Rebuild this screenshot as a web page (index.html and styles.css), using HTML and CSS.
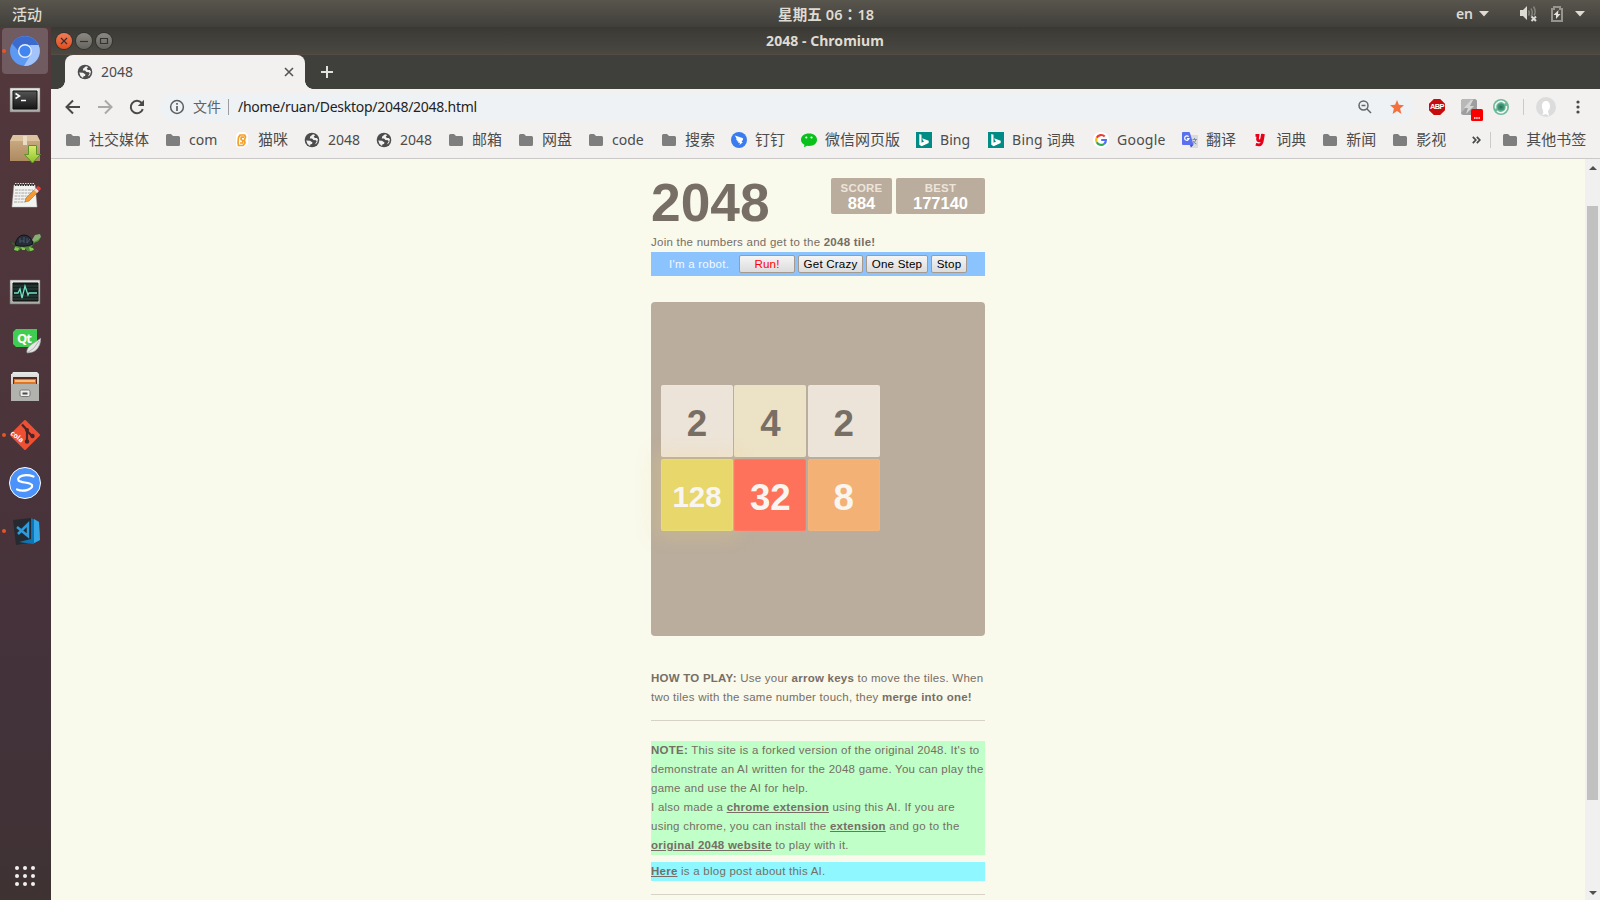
FILE: index.html
```html
<!DOCTYPE html>
<html lang="zh-CN">
<head>
<meta charset="utf-8">
<title>2048</title>
<link rel="stylesheet" href="styles.css">
</head>
<body>
<svg class="defs" aria-hidden="true">
  <defs>
    <linearGradient id="steel" x1="0" y1="0" x2="0" y2="1"><stop offset="0" stop-color="#e8e8e6"/><stop offset="1" stop-color="#a9a9a6"/></linearGradient>
    <linearGradient id="box" x1="0" y1="0" x2="0" y2="1"><stop offset="0" stop-color="#cfb189"/><stop offset="1" stop-color="#ae8a60"/></linearGradient>
    <linearGradient id="arrow" x1="0" y1="0" x2="0" y2="1"><stop offset="0" stop-color="#dbec6e"/><stop offset="1" stop-color="#8cc22a"/></linearGradient>
    <linearGradient id="screen" x1="0" y1="0" x2="0" y2="1"><stop offset="0" stop-color="#555"/><stop offset="1" stop-color="#161616"/></linearGradient>
  </defs>
  <symbol id="folder" viewBox="0 0 16 16"><path fill="#7e7e7e" d="M1 3.500Q1 2 2.500 2H6l2 2h5.500Q15 4 15 5.500v7Q15 14 13.500 14h-11Q1 14 1 12.500z"/></symbol>
  <symbol id="globe" viewBox="0 0 16 16"><circle cx="8" cy="8" r="7.300" fill="#4c4c4c"/><path fill="#f2f1f0" d="M2.200 8.500 6 8.700 8.500 10.500 8 12 6.500 12.200 6 14 3.500 12zM9 2.300 6.200 4.500 5.800 6.500 8 6.400 9.500 8 12 8.200 12.700 9.500 10.800 12.600 13 11 14 7.500 12.800 6 11 6.100 9.700 4.800 11.200 3z"/></symbol>
  <symbol id="bing" viewBox="0 0 16 16"><path fill="#008c84" d="M0 0h16v16H0z"/><path fill="#fff" d="M3.300 2 5.500 2.800V10.800L8.300 9.300 7 8.600 6.100 6.300 12.700 8.700V11L5.600 14.300 3.300 12.700z"/></symbol>
</svg>

<header class="topbar">
  <span class="activities">活动</span>
  <span class="clock" lang="zh-TW">星期五 06：18</span>
  <div class="status">
    <span>en</span>
    <svg class="caret" viewBox="0 0 10 6"><path d="M0 0h10L5 5.500z"/></svg>
    <svg class="volume" width="17" height="17" viewBox="0 0 17 17"><path fill="#dcdad5" d="M0 5h3l4-4v14l-4-4H0z"/><path fill="none" stroke="#85837c" stroke-width="1.500" d="M8.500 5.500q1.500 2.500 0 5M11 3.500q2.500 4.500 0 8M13.500 1.500q3 5 .5 9"/><path stroke="#dcdad5" stroke-width="2" d="m11.500 11.500 4.500 4.500m0-4.500-4.500 4.500"/></svg>
    <svg class="battery" width="12" height="16" viewBox="0 0 12 16"><path fill="none" stroke="#96948d" stroke-width="2" d="M1 3h2V1h6v2h2v12H1z"/><path fill="#e2e0dc" d="M7.500 4 2.500 9H5v4l4.500-5H7z"/></svg>
    <svg class="caret" viewBox="0 0 10 6"><path d="M0 0h10L5 5.500z"/></svg>
  </div>
</header>

<div class="desktop">
  <nav class="dock">
    <div class="app current running"><svg viewBox="0 0 32 32"><circle cx="16" cy="16" r="15" fill="#5d98f2"/><path fill="#3c6bd0" d="M3 8.500A15 15 0 0 1 29.500 10H16a6.500 6.500 0 0 0-6.500 6z"/><path fill="#a3c4fa" d="M29.500 10A15 15 0 0 1 15 31l7-12q2-5-1-9z"/><circle cx="16" cy="16" r="7" fill="#e9f1fd"/><circle cx="16" cy="16" r="5.600" fill="#4385f0"/></svg></div>
    <div class="app"><svg viewBox="0 -1 32 32"><path fill="url(#steel)" stroke="#777" stroke-width=".5" d="M1 4h30v24H1z"/><path fill="url(#screen)" stroke="#111" d="M4 7h24v18H4z"/><path fill="none" stroke="#fff" stroke-width="1.500" d="m6.500 9.500 4 2.500-4 2.500M12 16.500h5"/></svg></div>
    <div class="app"><svg viewBox="0 0 32 32"><path fill="url(#box)" d="M1 10 4 4h24l3 6v20H1z"/><path fill="#dcc29d" d="M4 4h24l3 6H1z"/><path fill="#eadbc4" d="M14 5h4v9h-4z"/><path fill="url(#arrow)" stroke="#5c922a" d="M19.500 14.500h8v9h4L23.500 32l-8-8.500h4z"/></svg></div>
    <div class="app"><svg viewBox="0 0 32 32"><path fill="#f3f3f1" stroke="#bbb" stroke-width=".5" d="M5 6h21l2 22H3z"/><path stroke="#333" stroke-width="3" stroke-dasharray="1.500 1" d="M6 5.500h20"/><path stroke="#ddd" stroke-dasharray="1.500 1" d="M6 4.500h20"/><path stroke="#a4a4a4" stroke-dasharray="3 .7 2 .7" d="M6 11h18M6 14h16M5.500 17h14M5.500 20h12M5 23h11"/><path fill="#f49a32" stroke="#9a5d1e" stroke-width=".5" d="m17 19 9-9 3 3-9 9-4 1z"/><path fill="#ddd" d="m25 11 2-2 3 3-2 2z"/><path fill="#e53b35" d="m27 9 2-2q3 1 3 3l-2 2z"/></svg></div>
    <div class="app"><svg viewBox="0 0 32 32"><path fill="#55803f" stroke="#29452a" stroke-width=".7" d="M1 15q3 0 6 3l13 1q4-2 5-6 0-4 3-4l3-1q1 3 0 5-2 3-5 3l-4 5 2 3-5 1-3-3H12l-2 2-5-1 1-4z"/><path fill="#262c38" stroke="#11141a" d="M6 18Q8 8 15 8q7 0 9 9-9 4-18 1z"/><path stroke="#536078" fill="none" stroke-width=".8" d="M11 11v5m0-2h4m0-4v6m3-5v5l3-4"/><path fill="#84c84d" d="m6 20 4 1-1 3-4-1zm6 0 4 1v2h-3zm8 0 4 1 1 2-4 1z"/><path fill="#86ad73" d="m23 13 3-5 5-1 1 3-3 3-4 2z"/></svg></div>
    <div class="app"><svg viewBox="0 -1 32 32"><path fill="url(#steel)" stroke="#70706d" stroke-width=".6" d="M1 4h30v24H1z"/><path fill="#14231f" stroke="#111" d="M4 7h25v18H4z"/><path stroke="#30453f" d="M4 10h25M4 13h25M4 20h25M4 23h25"/><path fill="none" stroke="#72e0c3" stroke-width="1.300" d="M5 17h4l2-4 2 9 3-12 3 9 1-2h8"/></svg></div>
    <div class="app"><svg viewBox="0 0 32 32"><path fill="#41cd52" d="M7 6h21v18H7L4 21V9z"/><text x="8" y="20" class="qt">Qt</text><path fill="#e7e8e6" stroke="#8c918d" stroke-width=".6" d="M32 15Q31 30 18 30q-1-5 5-9 5-3 9-6z"/><path stroke="#9b9f9c" stroke-width=".7" d="M18 30q7-3 12-12" fill="none"/></svg></div>
    <div class="app"><svg viewBox="0 0 32 32"><path fill="url(#steel)" d="M3 3 4 1h24l2 2v27H2V3z"/><path fill="#5a2a18" d="M4 6h24v8H4z"/><path fill="#e07528" d="M5 8h22v6H5z"/><path stroke="#ffd7a0" stroke-width="1.500" d="M6 10h20"/><path fill="#b1b1ae" d="M2 13h28v16q0 1-1 1H3q-1 0-1-1z"/><rect x="11" y="19" width="10" height="6.500" rx="1.500" fill="#eee" stroke="#777"/><path stroke="#4a4a4a" stroke-width="2" d="M13.500 22.500h5"/></svg></div>
    <div class="app running"><svg viewBox="0 0 32 32"><path fill="#ef5033" stroke="#ef5033" stroke-width="2" stroke-linejoin="round" d="M16 2 30 16 16 30 2 16z"/><path fill="none" stroke="#43272a" stroke-width="2.200" d="M13 5.500 18 11v12m0-11 5 5"/><circle cx="18" cy="11" r="2" fill="#43272a"/><circle cx="18" cy="22.500" r="2.200" fill="#43272a"/><circle cx="23.500" cy="17" r="2.200" fill="#43272a"/><text x="1" y="17" transform="rotate(38 4 16)" class="cola">cola</text></svg></div>
    <div class="app"><svg viewBox="0 0 32 32"><circle cx="16" cy="16" r="15.500" fill="#4b92fa" stroke="#fff" /><path fill="none" stroke="#fff" stroke-width="2.200" stroke-linecap="round" d="M24.500 9.500C15 6 7.500 10 9.500 13.500c2 2.500 12 1.500 13.500 4.500 1.500 4-8 7.500-15 4.500"/></svg></div>
    <div class="app running"><svg viewBox="0 0 32 32"><path fill="#252a30" d="M4 5 22 3 25 27 7 30z"/><path fill="#0d75b5" d="m22 3 8 4 1 18-7 4-14-2 12-3z"/><path fill="#35a7e6" d="m25 4 5 3 1 18-6 3z"/><path fill="none" stroke="#2f9bda" stroke-width="2.500" d="m8 12 11 9V9L9 19"/></svg></div>
    <svg class="launcher" viewBox="0 0 20 20"><g fill="#f2f1f0"><circle cx="2" cy="2" r="2"/><circle cx="10" cy="2" r="2"/><circle cx="18" cy="2" r="2"/><circle cx="2" cy="10" r="2"/><circle cx="10" cy="10" r="2"/><circle cx="18" cy="10" r="2"/><circle cx="2" cy="18" r="2"/><circle cx="10" cy="18" r="2"/><circle cx="18" cy="18" r="2"/></g></svg>
  </nav>

  <section class="window">
    <div class="titlebar">
      <div class="controls">
        <i class="ctl close"><svg viewBox="0 0 16 16"><path d="m5 5 6 6m0-6-6 6"/></svg></i>
        <i class="ctl"><svg viewBox="0 0 16 16"><path d="M4 8.500h8"/></svg></i>
        <i class="ctl"><svg viewBox="0 0 16 16"><path d="M4.500 5.500h7v5h-7z"/></svg></i>
      </div>
      <span class="wintitle">2048 - Chromium</span>
    </div>
    <div class="tabstrip">
      <div class="tab">
        <svg width="16" height="16"><use href="#globe"/></svg>
        <span>2048</span>
        <svg class="x" width="10" height="10" viewBox="0 0 10 10"><path d="m1 1 8 8m0-8-8 8"/></svg>
      </div>
      <svg class="plus" width="12" height="12" viewBox="0 0 12 12"><path d="M6 0v12M0 6h12"/></svg>
    </div>
    <div class="toolbar">
      <svg width="16" height="16" viewBox="0 0 16 16"><path class="nav" d="M15 8H2m6-6.500L1.500 8 8 14.500"/></svg>
      <svg width="16" height="16" viewBox="0 0 16 16"><path class="nav off" d="M1 8h13M8 1.500 14.500 8 8 14.500"/></svg>
      <svg width="16" height="16" viewBox="0 0 16 16"><path class="nav" d="M13.800 10.200A6.200 6.200 0 1 1 12.700 4"/><path fill="#494949" d="M15 .8V7H8.800z"/></svg>
      <div class="omnibox">
        <svg width="16" height="16" viewBox="0 0 16 16"><circle cx="8" cy="8" r="6.400" fill="none" stroke="#5b5e61" stroke-width="1.500"/><path stroke="#5b5e61" stroke-width="1.700" d="M8 7v5M8 4v1.700"/></svg>
        <span class="scheme">文件</span>
        <span class="url">/home/ruan/Desktop/2048/2048.html</span>
        <svg class="lens" width="14" height="14" viewBox="0 0 14 14"><path fill="none" stroke="#666" stroke-width="1.500" d="M5.500 1a4.500 4.500 0 1 1 0 9 4.500 4.500 0 0 1 0-9M9 9l4 4M3.500 5.500h4"/></svg>
        <svg class="star" width="14" height="14" viewBox="0 0 14 14"><path fill="#f4713f" d="m7 0 1.900 4.800L14 5.300l-3.900 3.300L11.400 14 7 11.100 2.600 14l1.300-5.400L0 5.300l5.100-.5z"/></svg>
      </div>
      <div class="extensions">
        <span class="abp">ABP</span>
        <svg class="flash" width="22" height="22" viewBox="0 0 22 22"><rect width="16" height="16" rx="2.500" fill="#9e9e9e"/><path fill="#b8b8b8" d="M2 0h11L0 14V2z"/><path fill="#d6d6d6" d="M10 1 3 9h4l-2 6 8-8H9l3-6z"/><rect x="10" y="10" width="12" height="12" rx="1.500" fill="#f90000"/><path stroke="#fff" stroke-width="1.500" stroke-dasharray="1.500 .7" d="M13 19h6.500"/></svg>
        <svg width="16" height="16" viewBox="0 0 16 16"><circle cx="8" cy="8" r="8" fill="#6fb99b"/><circle cx="8" cy="8" r="3.600" fill="#3f9274"/><path fill="none" stroke="#f2f7f5" stroke-width="1.600" d="M2.700 9.500A5.500 5.500 0 0 1 12 4.200M13.300 7A5.500 5.500 0 0 1 4 12"/><circle cx="8" cy="8" r="1.500" fill="#25765a"/></svg>
        <i class="rule"></i>
        <svg width="20" height="20" viewBox="0 0 20 20"><circle cx="10" cy="10" r="10" fill="#dcdcdc"/><path fill="#fff" d="M10 4q4 0 4 5.500 0 3-2 4.500l1 5-3-2-4 1q2-2 1-5-1.500-2-1-5 .5-4 4-4z"/></svg>
        <svg class="more" width="4" height="14" viewBox="0 0 4 14"><circle cx="2" cy="2" r="1.600"/><circle cx="2" cy="7" r="1.600"/><circle cx="2" cy="12" r="1.600"/></svg>
      </div>
    </div>
    <div class="bookmarks">
      <a><svg><use href="#folder"/></svg><span>社交媒体</span></a>
      <a><svg><use href="#folder"/></svg><span class="w29">com</span></a>
      <a><svg viewBox="0 0 16 16"><path fill="#fff" d="M5 0h6l3 3v9l-4 4H4l-2-3V3z"/><path fill="none" stroke="#f4a029" stroke-width="1.700" stroke-linejoin="round" d="M6 3h4.500l1 2-1 3 .5 3-2 2.500H4.500l-.5-3 .5-5zM10 5.200H7.200L7 7.500l2 1-.5 2.500H6"/></svg><span>猫咪</span></a>
      <a><svg><use href="#globe"/></svg><span class="w32">2048</span></a>
      <a><svg><use href="#globe"/></svg><span class="w32">2048</span></a>
      <a><svg><use href="#folder"/></svg><span>邮箱</span></a>
      <a><svg><use href="#folder"/></svg><span>网盘</span></a>
      <a><svg><use href="#folder"/></svg><span class="w33">code</span></a>
      <a><svg><use href="#folder"/></svg><span>搜索</span></a>
      <a><svg viewBox="0 0 16 16"><circle cx="8" cy="8" r="8" fill="#3a7bf0"/><path fill="#fff" d="M3.800 3.500 11.500 6q1 .5.500 1.500L10.500 10H12l-3.500 3 .5-2.200-2-.1.500-1.200L5.500 9l1-.5L4.700 7l1-.2z"/></svg><span>钉钉</span></a>
      <a><svg viewBox="0 0 16 16"><path fill="#09c11b" d="M8 1.500c5 0 8 2.700 8 6.300S13 14 8 14l-2-.2-3 1.500.4-2.500C1 11.500 0 9.800 0 7.800c0-3.600 3-6.300 8-6.300"/><circle cx="5.300" cy="5.500" r="1.100" fill="#fff"/><circle cx="10.500" cy="5.500" r="1.100" fill="#fff"/></svg><span>微信网页版</span></a>
      <a><svg><use href="#bing"/></svg><span class="w32">Bing</span></a>
      <a><svg><use href="#bing"/></svg><span class="w65">Bing 词典</span></a>
      <a><svg viewBox="0 0 16 16"><circle cx="8" cy="8" r="8" fill="#fff"/><g fill="none" stroke-width="2.200"><path stroke="#ea3d34" d="M11.700 4.500A5 5 0 0 0 3.700 5.700"/><path stroke="#fbbc05" d="M3.700 5.700a5 5 0 0 0 0 4.600"/><path stroke="#2fa952" d="M3.700 10.300a5 5 0 0 0 7.500 1.500"/><path stroke="#4c6ff5" d="M11.200 11.800A5 5 0 0 0 12.900 8H8.200"/></g></svg><span class="w49">Google</span></a>
      <a><svg viewBox="0 0 16 16"><path fill="#d9dbde" d="M5 3h11v13H8z"/><path fill="#5b70ee" d="M1 0h6.500l1 2.500L11.500 13H1q-1 0-1-1V1q0-1 1-1"/><path fill="#4548c8" d="m8 13 3.500-.2L9 15.500z"/><path fill="none" stroke="#fff" stroke-width="1.200" d="M6.600 4.700a2.200 2.200 0 1 0 .4 2H5"/><path fill="none" stroke="#7b8da5" d="M10.500 7.500H15M12.500 6v1.500M14 7.500q-1 3-3 4m0-2.500q1 2 3.500 3"/></svg><span>翻译</span></a>
      <a><svg viewBox="0 0 16 16"><path fill="none" stroke="#e70018" stroke-width="2.700" d="M3.500 3.300H6L5.500 7q0 2 2 1.800 1.800-.2 2.200-2.300l.8-4.500M11.500 2 10.300 9q-.7 4-3.500 3.800-1.500 0-3-.4"/></svg><span>词典</span></a>
      <a><svg><use href="#folder"/></svg><span>新闻</span></a>
      <a><svg><use href="#folder"/></svg><span>影视</span></a>
      <svg class="chevrons" viewBox="0 0 9 8"><path d="m.8.8 3 3.200-3 3.200M4.800.8l3 3.200-3 3.200"/></svg>
      <i class="rule"></i>
      <a><svg><use href="#folder"/></svg><span>其他书签</span></a>
    </div>

    <div class="viewport">
      <main class="page">
        <div class="game">
          <div class="heading">
            <h1>2048</h1>
            <div class="scores">
              <div class="score"><small>SCORE</small><b>884</b></div>
              <div class="score best"><small>BEST</small><b>177140</b></div>
            </div>
          </div>
          <p class="intro">Join the numbers and get to the <b>2048 tile!</b></p>
          <div class="robot">
            <span>I'm a robot.</span>
            <button class="run">Run!</button>
            <button class="crazy">Get Crazy</button>
            <button class="step">One Step</button>
            <button class="stop">Stop</button>
          </div>
          <div class="board">
            <div class="tile t2">2</div><div class="tile t4">4</div><div class="tile t2">2</div>
            <div class="tile t128">128</div><div class="tile t32">32</div><div class="tile t8">8</div>
          </div>
          <p class="how"><span class="line"><b>HOW TO PLAY:</b> Use your <b>arrow keys</b> to move the tiles. When</span> <span class="line">two tiles with the same number touch, they <b>merge into one!</b></span></p>
          <hr>
          <p class="note"><span class="line"><b>NOTE:</b> This site is a forked version of the original 2048. It's to</span> <span class="line">demonstrate an AI written for the 2048 game. You can play the</span> <span class="line">game and use the AI for help.</span> <span class="line">I also made a <a>chrome extension</a> using this AI. If you are</span> <span class="line">using chrome, you can install the <a>extension</a> and go to the</span> <span class="line"><a>original 2048 website</a> to play with it.</span></p>
          <p class="blog"><span class="line"><a>Here</a> is a blog post about this AI.</span></p>
          <hr class="last">
        </div>
      </main>
      <div class="scrollbar">
        <svg viewBox="0 0 8 4"><path d="M0 4h8L4 0z"/></svg>
        <i class="thumb"></i>
        <svg viewBox="0 0 8 4"><path d="M0 0h8L4 4z"/></svg>
      </div>
    </div>
  </section>
</div>
</body>
</html>
```
FILE: styles.css
```css
* { box-sizing: border-box; }
body {
  margin: 0;
  width: 1600px;
  height: 900px;
  overflow: hidden;
  display: flex;
  flex-direction: column;
  font: 14px/20px "Noto Sans", "Noto Sans CJK SC", sans-serif;
  color: #4c4c4c;
}
svg { display: block; flex: none; }
.defs { width: 0; height: 0; position: absolute; }

/* System bar */
.topbar {
  flex: none;
  height: 27px;
  display: grid;
  grid-template-columns: 1fr 98px 1fr;
  align-items: center;
  padding: 0 12px;
  background: linear-gradient(#58554d, #403f3a);
  color: #dfdbd2;
  font-weight: 600;
}
.activities { font-size: 15px; font-weight: 500; }
.clock { white-space: nowrap; margin: 1px -30px 0 27px; font-family: "Noto Sans", "Noto Sans CJK TC", sans-serif; font-size: 14.500px; letter-spacing: .15px; }
.status { display: flex; justify-content: flex-end; align-items: center; padding-right: 3px; }
.caret { width: 10px; height: 6px; fill: #dfdbd2; margin-left: 6px; }
.volume { margin-left: 31px; }
.battery { margin: 0 6px 0 14px; }

.desktop { flex: 1; min-height: 0; display: flex; }

/* Launcher */
.dock {
  flex: none;
  width: 51px;
  display: flex;
  flex-direction: column;
  background: linear-gradient(#53383c, #48333a 60%, #42323a 80%, #3f3233);
}
.app { height: 48px; padding: 0 1px 0 0; display: flex; align-items: center; justify-content: center; }
.app svg { width: 32px; height: 32px; }
.current { height: 46px; margin: 1px 3px 1px 2px; padding: 0; border-radius: 4px; background: #6f5b60; }
.running { position: relative; }
.running::before { content: ""; position: absolute; left: 2px; top: 22px; width: 4px; height: 4px; border-radius: 50%; background: #e95420; }
.current::before { left: 0; top: 21px; }
.launcher { width: 20px; height: 20px; margin: auto 0 14px 15px; }
.qt { font: bold 13px "Noto Sans", sans-serif; fill: #fff; letter-spacing: -1px; }
.cola { font: bold 7px "Noto Sans", sans-serif; fill: #fff; }

/* Window frame */
.window { flex: 1; min-width: 0; display: flex; flex-direction: column; }
.titlebar {
  height: 28px;
  display: grid;
  grid-template-columns: 1fr auto 1fr;
  align-items: center;
  padding: 0 6px 0 5px;
  background: linear-gradient(#3a3935, #4a4841);
  border-bottom: 1px solid #544c45;
}
.controls { display: flex; gap: 4px; }
.ctl { width: 16px; height: 16px; border-radius: 50%; background: linear-gradient(#8b8982, #66645e); box-shadow: 0 0 0 1px #33322e; }
.ctl svg { width: 16px; height: 16px; fill: none; stroke: #34332f; stroke-width: 1.200; }
.close { background: linear-gradient(#f47b56, #e04e1f); }
.wintitle { color: #dfdbd2; font-weight: 700; font-size: 14px; letter-spacing: .04px; }

.tabstrip { height: 34px; background: #3f403b; display: flex; align-items: center; padding-left: 14px; }
.tab {
  position: relative;
  align-self: stretch;
  width: 240px;
  display: flex;
  align-items: center;
  padding: 0 11px 0 12px;
  border-radius: 8px 8px 0 0;
  background: #f2f1f0;
}
.tab::before, .tab::after { content: ""; position: absolute; bottom: 0; width: 8px; height: 8px; }
.tab::before { left: -8px; background: radial-gradient(circle at 0 0, transparent 7.500px, #f2f1f0 8px); }
.tab::after { right: -8px; background: radial-gradient(circle at 100% 0, transparent 7.500px, #f2f1f0 8px); }
.tab span { flex: 1; margin-left: 8px; }
.x { fill: none; stroke: #555; stroke-width: 1.600; }
.plus { margin-left: 16px; stroke: #e2e1dc; stroke-width: 2; }

.toolbar { height: 36px; background: #f2f1f0; display: flex; align-items: center; padding-left: 14px; gap: 16px; }
.nav { fill: none; stroke: #494949; stroke-width: 2; }
.off { stroke: #aaa9a8; }
.omnibox { width: 1254px; height: 28px; border-radius: 14px; background: #eef2f4; display: flex; align-items: center; padding: 0 11px 0 9px; margin-left: -1px; }
.scheme { margin-left: 8px; padding-right: 7px; line-height: 16px; border-right: 1px solid #9a9c9e; color: #5f6266; }
.url { flex: 1; margin-left: 9px; color: #222; font-size: 14px; letter-spacing: -.27px; }
.lens { margin-right: 18px; }
.star { margin-right: -1px; }
.extensions { display: flex; align-items: center; gap: 16px; margin-left: -1px; }
.abp {
  width: 16px;
  height: 16px;
  background: #c70d0c;
  clip-path: polygon(30% 0, 70% 0, 100% 30%, 100% 70%, 70% 100%, 30% 100%, 0 70%, 0 30%);
  font: bold 7.500px/16px "Liberation Sans", sans-serif;
  letter-spacing: -.6px;
  text-align: center;
  color: #fff;
}
.flash { margin: 6px -6px 0 0; }
.rule { width: 1px; height: 16px; background: #cbcac9; }
.extensions .rule { margin: 0 -4px 0 -2px; }
.more { margin-left: 4px; fill: #494949; }

.bookmarks { height: 34px; padding: 0 13px 4px 14px; display: flex; align-items: center; background: #f2f1f0; border-bottom: 1px solid #cac9c8; gap: 16px; white-space: nowrap; }
.bookmarks a { display: flex; align-items: center; gap: 8px; font-size: 15px; }
.bookmarks a svg { width: 16px; height: 16px; }
.bookmarks a > span { margin-top: -1px; }
.bookmarks a > .w29, .bookmarks a > .w32, .bookmarks a > .w33, .bookmarks a > .w65, .bookmarks a > .w49 { margin-top: 1px; font-size: 14px; }
.w29 { width: 29px; }
.w32 { width: 32px; }
.w33 { width: 33px; }
.w65 { width: 65px; letter-spacing: .2px; }
.w49 { width: 49px; letter-spacing: .2px; }
.bookmarks .chevrons { width: 9px; height: 8px; margin-left: 10px; fill: none; stroke: #494949; stroke-width: 1.700; }
.bookmarks .rule { margin: 0 -5px 0 -7px; }

/* Page */
.viewport { flex: 1; min-height: 0; display: flex; }
.page { flex: 1; overflow: hidden; background: #f9f9ec; color: #776e65; font: 11.490px/19px "Liberation Sans", Arial, sans-serif; letter-spacing: .25px; }
.game { width: 334px; margin: 0 auto; padding-top: 19px; }
.heading { height: 54px; display: flex; justify-content: space-between; letter-spacing: 0; }
h1 { margin: -2px 0 0; font-size: 53.300px; line-height: 54px; }
.scores { display: flex; gap: 4px; align-items: flex-start; }
.score { width: 61px; height: 36px; padding-top: 4px; border-radius: 2px; background: #baad9d; text-align: center; }
.best { width: 89px; }
.score small { display: block; font: bold 11.450px/13px "Liberation Sans", Arial, sans-serif; color: #eee4da; letter-spacing: .25px; }
.score b { display: block; font-size: 16.500px; line-height: 16px; color: #fff; }
p { margin: 0; }
.intro { height: 20px; line-height: 20px; white-space: nowrap; }
.robot { height: 24px; display: flex; align-items: center; background: #8bc3ff; color: #f4f9ff; padding-left: 18px; }
.robot span { width: 70px; }
.robot button { height: 18px; padding: 0; margin-right: 3px; border: 1px solid #a49a90; border-radius: 2px; background: linear-gradient(#f5f5f5, #dcdcdc); font: 11.600px/14px "Liberation Sans", Arial, sans-serif; letter-spacing: .18px; color: #000; white-space: nowrap; }
.robot .run { width: 56px; color: #f00; }
.crazy { width: 65px; }
.step { width: 62px; }
.stop { width: 36px; }
.board {
  width: 334px;
  height: 334px;
  margin-top: 26px;
  padding: 83px 0 0 10px;
  border-radius: 4px;
  background: #baad9d;
  display: grid;
  grid-template-columns: repeat(3, 72px);
  grid-template-rows: repeat(2, 72px);
  column-gap: 1.330px;
  row-gap: 2px;
}
.tile { border-radius: 2px; text-align: center; font-size: 36.700px; font-weight: bold; line-height: 77px; letter-spacing: 0; color: #f9f6f2; box-shadow: inset 0 0 0 .67px rgba(255, 255, 255, .08); }
.t2 { background: #ede4d9; color: #776e65; }
.t4 { background: #ece2c6; color: #776e65; }
.t8 { background: #f4b175; }
.t32 { background: #fe725b; }
.t128 { background: #e8d76b; font-size: 29.500px; line-height: 76px; box-shadow: 0 0 20px 6px rgba(243, 215, 116, .24), inset 0 0 0 .67px rgba(255, 255, 255, .14); }
.how { margin-top: 33px; }
.line { display: block; white-space: nowrap; }
hr { height: 1px; margin: 13px 0 20px; border: 0; background: #d6d2c6; }
a { color: inherit; font-weight: bold; text-decoration: underline; }
.bookmarks a { font-weight: normal; text-decoration: none; }
.note { background: #c0ffc8; }
.blog { margin-top: 7px; background: #8ef7ff; }
.last { margin: 13px 0 0; }

.scrollbar { width: 15px; background: #f0f0f0; display: flex; flex-direction: column; align-items: center; padding: 7px 0 5px; }
.scrollbar svg { width: 8px; height: 4px; fill: #505050; }
.thumb { width: 11px; height: 594px; margin: 36px 0 auto; background: #c1c1c1; }
```
